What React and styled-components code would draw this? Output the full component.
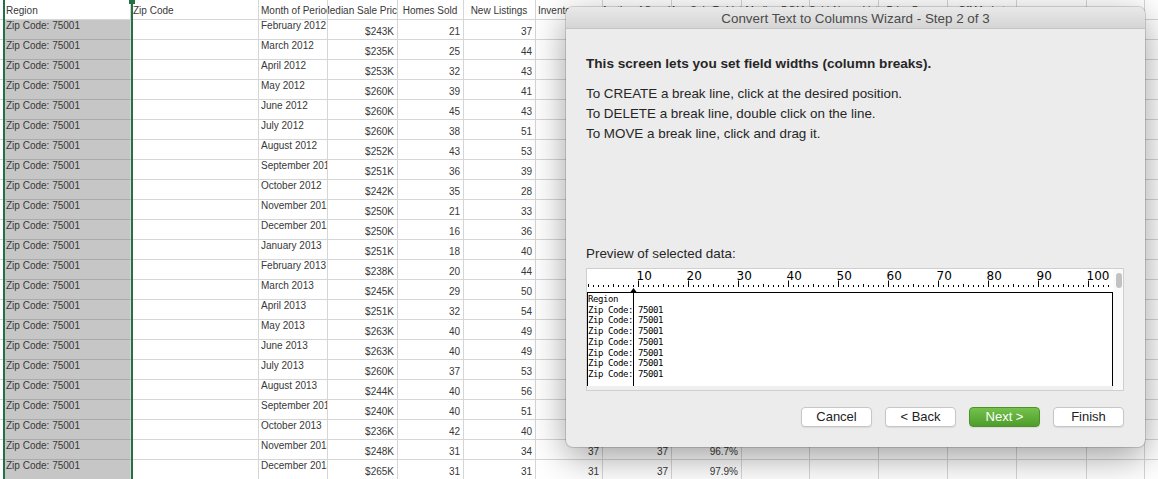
import styled, { createGlobalStyle } from 'styled-components'

const GlobalStyle = createGlobalStyle`
  html, body {
    margin: 0;
    padding: 0;
    background: #fff;
  }
  body {
    font-family: "Liberation Sans", Arial, sans-serif;
    overflow: hidden;
  }
`

// column widths of the sheet, in px (each includes its right grid line)
const COLS = [4, 127, 128, 69, 70, 66, 72, 67, 69, 70, 68, 69, 69, 69, 70, 58, 70]

const HEADERS = [
  { t: '' },
  { t: 'Region' },
  { t: 'Zip Code' },
  { t: 'Month of Period' },
  { t: 'Median Sale Price', a: 'center' },
  { t: 'Homes Sold', a: 'center' },
  { t: 'New Listings', a: 'center' },
  { t: 'Inventory' },
  { t: 'Months of Supply', a: 'center' },
  { t: 'Avg Sale To List', a: 'center' },
  { t: 'Median DOM', a: 'center' },
  { t: 'Sold Above List', a: 'center' },
  { t: 'Price Drops', a: 'center' },
  { t: 'Off Market', a: 'center' },
  { t: '' },
  { t: '' },
  { t: '' },
]

const MONTHS = [
  'February 2012', 'March 2012', 'April 2012', 'May 2012', 'June 2012', 'July 2012',
  'August 2012', 'September 2012', 'October 2012', 'November 2012', 'December 2012',
  'January 2013', 'February 2013', 'March 2013', 'April 2013', 'May 2013', 'June 2013',
  'July 2013', 'August 2013', 'September 2013', 'October 2013', 'November 2013', 'December 2013',
]
const PRICE = [243, 235, 253, 260, 260, 260, 252, 251, 242, 250, 250, 251, 238, 245, 251, 263, 263, 260, 244, 240, 236, 248, 265]
const SOLD = [21, 25, 32, 39, 45, 38, 43, 36, 35, 21, 16, 18, 20, 29, 32, 40, 40, 37, 40, 40, 42, 31, 31]
const LISTINGS = [37, 44, 43, 41, 43, 51, 53, 39, 28, 33, 36, 40, 44, 50, 54, 49, 49, 53, 56, 51, 40, 34, 31]
// only the last two rows of these columns show below the dialog
const INVENTORY = { 21: 37, 22: 31 }
const SUPPLY = { 21: 37, 22: 37 }
const TOLIST = { 21: '96.7%', 22: '97.9%' }

const PREVIEW = ['Region', ...Array(7).fill('Zip Code: 75001')]

const Sheet = styled.div`
  position: relative;
  width: 1158px;
  height: 479px;
  overflow: hidden;
  background: #fff;
`

const Grid = styled.div`
  display: grid;
  grid-template-columns: ${COLS.map(w => `${w}px`).join(' ')};
  grid-auto-rows: 20px;
`

const Cell = styled.div`
  box-sizing: border-box;
  height: 20px;
  display: flex;
  justify-content: ${p => (p.$align === 'right' ? 'flex-end' : p.$align === 'center' ? 'center' : 'flex-start')};
  padding: ${p => p.$top}px 3px 0 2px;
  border-right: 1px solid #d6d6d6;
  border-bottom: 1px solid ${p => (p.$sel ? '#aaaaaa' : '#d6d6d6')};
  background: ${p => (p.$sel ? '#c6c6c6' : '#fff')};
  overflow: hidden;
  white-space: nowrap;
  font-size: 10px;
  line-height: 12px;
  color: #383838;
`

const Selection = styled.div`
  position: absolute;
  left: 3px;
  top: -3px;
  width: 130px;
  height: 490px;
  box-sizing: border-box;
  border-left: 2px solid #217346;
  border-right: 2px solid #217346;
  pointer-events: none;

  &::after {
    content: '';
    position: absolute;
    right: -4px;
    top: 2px;
    width: 6px;
    height: 5px;
    background: #217346;
  }
`

const Dialog = styled.div`
  position: absolute;
  left: 566px;
  top: 7px;
  width: 579px;
  height: 440px;
  box-sizing: border-box;
  display: flex;
  flex-direction: column;
  background: #ececec;
  border-radius: 7px;
  overflow: hidden;
  box-shadow: 0 0 0 1px rgba(0, 0, 0, 0.14), 0 10px 36px rgba(0, 0, 0, 0.38);
`

const TitleBar = styled.div`
  box-sizing: border-box;
  height: 22px;
  padding-top: 1px;
  border-bottom: 1px solid #c4c4c4;
  background: linear-gradient(#e9e9e9, #d5d5d5);
  text-align: center;
  font-size: 13.4px;
  line-height: 21px;
  color: #4a4a4a;
`

const Body = styled.div`
  flex: 1;
  display: flex;
  flex-direction: column;
  padding: 27px 21px 20px 20px;
  color: #262626;
`

const Lead = styled.div`
  font-size: 13.6px;
  font-weight: bold;
  line-height: 16px;
`

const Steps = styled.div`
  margin-top: 12px;
  font-size: 13.4px;
  line-height: 20px;
`

const Label = styled.div`
  margin-top: 102px;
  font-size: 13.4px;
  line-height: 16px;
`

const Frame = styled.div`
  margin-top: 6px;
  display: flex;
  border: 1px solid #cfcfcf;
  background: #fff;
`

const PreviewCol = styled.div`
  width: 526px;
  display: flex;
  flex-direction: column;
`

const PreviewBox = styled.div`
  position: relative;
  box-sizing: border-box;
  height: 94px;
  padding-top: 1px;
  border: 1px solid #000;
  border-bottom: none;
  background: #fff;
  overflow: hidden;
  white-space: pre;
  font-family: "DejaVu Sans Mono", monospace;
  font-size: 9px;
  letter-spacing: -0.42px;
  line-height: 10.7px;
  color: #000;
`

const BreakLine = styled.div`
  position: absolute;
  left: ${p => p.$at * 5}px;
  top: 0;
  bottom: 0;
  width: 1px;
  background: #000;
`

const HScroll = styled.div`
  height: 4px;
  background: #efefef;
`

const VScroll = styled.div`
  width: 10px;
  background: #fafafa;
`

const Thumb = styled.div`
  width: 6px;
  height: 15px;
  margin: 4px 0 0 3px;
  border-radius: 3px;
  background: #c2c2c2;
`

const Buttons = styled.div`
  margin-top: 16px;
  display: flex;
  justify-content: flex-end;
  gap: 13px;
`

const Button = styled.div`
  box-sizing: border-box;
  width: 71px;
  height: 20px;
  border-radius: 4px;
  border: 1px solid ${p => (p.$primary ? '#4c9229' : '#c6c6c6')};
  background: ${p => (p.$primary ? 'linear-gradient(#74c24c, #4e9c2b)' : '#fff')};
  box-shadow: 0 1px 1px rgba(0, 0, 0, 0.08);
  text-align: center;
  font-size: 13px;
  line-height: 18px;
  color: ${p => (p.$primary ? '#fff' : '#222')};
`

const Ruler = ({ breakAt }) => {
  const ticks = []
  for (let k = 0; k <= 105; k++) {
    const x = 1 + k * 5 + 0.5
    if (x > 525) break
    const y1 = k % 10 === 0 && k > 0 ? 11.5 : k % 5 === 0 ? 15 : 16
    ticks.push(<line key={k} x1={x} x2={x} y1={y1} y2={18} stroke="#000" strokeWidth="1" />)
  }
  const labels = []
  for (let k = 10; k <= 100; k += 10) {
    labels.push(
      <text key={k} x={1 + k * 5 - 1.5} y={11} fontFamily="DejaVu Sans, sans-serif" fontSize="12" fill="#000">
        {k}
      </text>
    )
  }
  const bx = 1 + breakAt * 5 + 0.5
  return (
    <svg width="526" height="23" style={{ display: 'block' }}>
      {ticks}
      {labels}
      <polygon points={`${bx - 3},23 ${bx},19 ${bx + 3},23`} fill="#000" />
    </svg>
  )
}

const Wizard = () => (
  <Dialog>
    <TitleBar>Convert Text to Columns Wizard - Step 2 of 3</TitleBar>
    <Body>
      <Lead>This screen lets you set field widths (column breaks).</Lead>
      <Steps>
        <div>To CREATE a break line, click at the desired position.</div>
        <div>To DELETE a break line, double click on the line.</div>
        <div>To MOVE a break line, click and drag it.</div>
      </Steps>
      <Label>Preview of selected data:</Label>
      <Frame>
        <PreviewCol>
          <Ruler breakAt={9} />
          <PreviewBox>
            {PREVIEW.map((line, i) => (
              <div key={i}>{line}</div>
            ))}
            <BreakLine $at={9} />
          </PreviewBox>
          <HScroll />
        </PreviewCol>
        <VScroll>
          <Thumb />
        </VScroll>
      </Frame>
      <Buttons>
        <Button>Cancel</Button>
        <Button>&lt; Back</Button>
        <Button $primary>Next &gt;</Button>
        <Button>Finish</Button>
      </Buttons>
    </Body>
  </Dialog>
)

const App = () => {
  const rows = MONTHS.map((m, i) => [
    { t: '' },
    { t: 'Zip Code: 75001', sel: true },
    { t: '' },
    { t: m, top: 0 },
    { t: `$${PRICE[i]}K`, a: 'right', top: 6 },
    { t: SOLD[i], a: 'right', top: 6 },
    { t: LISTINGS[i], a: 'right', top: 6 },
    { t: INVENTORY[i] ?? '', a: 'right', top: 6 },
    { t: SUPPLY[i] ?? '', a: 'right', top: 6 },
    { t: TOLIST[i] ?? '', a: 'right', top: 6 },
    { t: '' }, { t: '' }, { t: '' }, { t: '' }, { t: '' }, { t: '' }, { t: '' },
  ])

  return (
    <>
      <GlobalStyle />
      <Sheet>
        <Grid>
          {HEADERS.map((h, c) => (
            <Cell key={`h${c}`} $align={h.a} $top={5}>
              {h.t}
            </Cell>
          ))}
          {rows.map((row, r) =>
            row.map((cell, c) => (
              <Cell key={`${r}-${c}`} $align={cell.a} $sel={cell.sel} $top={cell.top ?? 0}>
                {cell.t}
              </Cell>
            ))
          )}
        </Grid>
        <Selection />
        <Wizard />
      </Sheet>
    </>
  )
}

export default App
